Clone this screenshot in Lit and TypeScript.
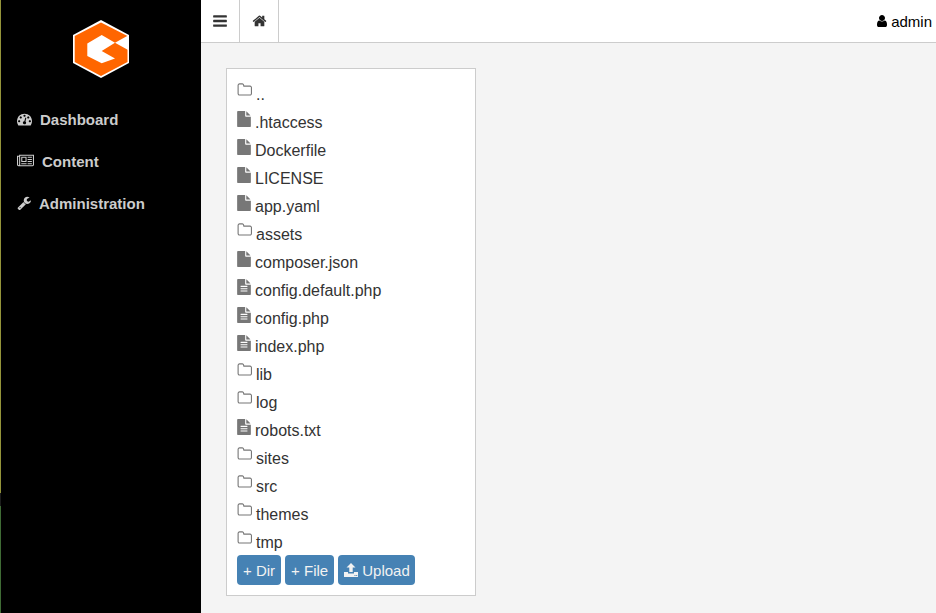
import { LitElement, html, css, svg } from "lit";
import { customElement } from "lit/decorators.js";

const P = {
  bars: "M1664 1344v128q0 26-19 45t-45 19h-1408q-26 0-45-19t-19-45v-128q0-26 19-45t45-19h1408q26 0 45 19t19 45zm0-512v128q0 26-19 45t-45 19h-1408q-26 0-45-19t-19-45v-128q0-26 19-45t45-19h1408q26 0 45 19t19 45zm0-512v128q0 26-19 45t-45 19h-1408q-26 0-45-19t-19-45v-128q0-26 19-45t45-19h1408q26 0 45 19t19 45z",
  home: "M1472 992v480q0 26-19 45t-45 19h-384v-384h-256v384h-384q-26 0-45-19t-19-45v-480q0-1 .5-3t.5-3l575-474 575 474q1 2 1 6zm223-69l-62 74q-8 9-21 11h-3q-13 0-21-7l-692-577-692 577q-12 8-24 7-13-2-21-11l-62-74q-8-10-7-23.500t11-21.500l719-599q32-26 76-26t76 26l244 204v-195q0-14 9-23t23-9h192q14 0 23 9t9 23v408l219 182q10 8 11 21.500t-7 23.500z",
  user: "M1536 1399q0 109-62.500 187t-150.500 78h-854q-88 0-150.500-78t-62.500-187q0-85 8.500-160.500t31.500-152 58.500-131 94-89 134.500-34.500q131 128 313 128t313-128q76 0 134.500 34.500t94 89 58.500 131 31.500 152 8.500 160.500zm-256-887q0 159-112.500 271.500t-271.500 112.500-271.500-112.500-112.500-271.500 112.500-271.500 271.500-112.500 271.500 112.500 112.500 271.500z",
  folder: "M1600 1312v-704q0-40-28-68t-68-28h-704q-40 0-68-28t-28-68v-64q0-40-28-68t-68-28h-320q-40 0-68 28t-28 68v960q0 40 28 68t68 28h1216q40 0 68-28t28-68zm128-704v704q0 92-66 158t-158 66h-1216q-92 0-158-66t-66-158v-960q0-92 66-158t158-66h320q92 0 158 66t66 158v32h672q92 0 158 66t66 158z",
  file: "M1024 512v-472q22 14 36 28l408 408q14 14 28 36h-472zm-128 32q0 40 28 68t68 28h544v1056q0 40-28 68t-68 28h-1344q-40 0-68-28t-28-68v-1600q0-40 28-68t68-28h800v544z",
  text: "M1596 476q14 14 28 36h-472v-472q22 14 36 28zm-476 164h544v1056q0 40-28 68t-68 28h-1344q-40 0-68-28t-28-68v-1600q0-40 28-68t68-28h800v544q0 40 28 68t68 28zm160 736v-64q0-14-9-23t-23-9h-704q-14 0-23 9t-9 23v64q0 14 9 23t23 9h704q14 0 23-9t9-23zm0-256v-64q0-14-9-23t-23-9h-704q-14 0-23 9t-9 23v64q0 14 9 23t23 9h704q14 0 23-9t9-23zm0-256v-64q0-14-9-23t-23-9h-704q-14 0-23 9t-9 23v64q0 14 9 23t23 9h704q14 0 23-9t9-23z",
  dash: "M384 1152q0-53-37.500-90.500t-90.500-37.500-90.500 37.500-37.500 90.500 37.500 90.500 90.500 37.500 90.500-37.500 37.500-90.500zm192-448q0-53-37.500-90.500t-90.500-37.500-90.500 37.500-37.500 90.500 37.500 90.500 90.500 37.500 90.500-37.500 37.500-90.500zm428 481l101-382q6-26-7.500-48.500t-38.500-29.500-48 7-30 39l-101 382q-60 5-107 43.500t-63 98.500q-20 77 20 146t117 89 146-20 89-117q16-60-6-117t-72-91zm660-33q0-53-37.500-90.500t-90.500-37.500-90.500 37.500-37.500 90.500 37.500 90.500 90.500 37.500 90.500-37.500 37.500-90.500zm-640-640q0-53-37.500-90.500t-90.500-37.500-90.500 37.500-37.500 90.500 37.500 90.500 90.500 37.500 90.500-37.500 37.500-90.500zm448 192q0-53-37.500-90.500t-90.500-37.500-90.500 37.500-37.500 90.500 37.500 90.500 90.500 37.500 90.500-37.500 37.500-90.500zm320 448q0 261-141 483-19 29-54 29h-1402q-35 0-54-29-141-221-141-483 0-182 71-348t191-286 286-191 348-71 348 71 286 191 191 286 71 348z",
  news: "M1024 512h-384v384h384v-384zm128 640v128h-640v-128h640zm0-768v640h-640v-640h640zm640 768v128h-512v-128h512zm0-256v128h-512v-128h512zm0-256v128h-512v-128h512zm0-256v128h-512v-128h512zm-1536 960v-960h-128v960q0 26 19 45t45 19 45-19 19-45zm1664 0v-1088h-1536v1088q0 33-11 64h1483q26 0 45-19t19-45zm128-1216v1216q0 80-56 136t-136 56h-1664q-80 0-136-56t-56-136v-1088h256v-128h1792z",
  wrench: "M448 1472q0-26-19-45t-45-19-45 19-19 45 19 45 45 19 45-19 19-45zm644-420l-682 682q-37 37-90 37-52 0-91-37l-106-108q-38-36-38-90 0-53 38-91l681-681q39 98 114.500 173.500t173.500 114.500zm634-435q0 39-23 106-47 134-164.500 217.500t-258.500 83.500q-185 0-316.500-131.500t-131.500-316.500 131.500-316.500 316.500-131.500q58 0 121.500 16.500t107.500 46.500q16 11 16 28t-16 28l-293 169v224l193 107q5-3 79-48.500t135.500-81 70.500-35.500q15 0 23.500 10t8.500 25z",
};

const icon = (d: string, vb: string, cls: string) =>
  html`<svg class=${cls} viewBox=${vb} fill="currentColor" aria-hidden="true">${svg`<path d=${d}></path>`}</svg>`;

type Kind = "folder" | "file" | "text";
const ENTRIES: [string, Kind][] = [
  ["..", "folder"],
  [".htaccess", "file"],
  ["Dockerfile", "file"],
  ["LICENSE", "file"],
  ["app.yaml", "file"],
  ["assets", "folder"],
  ["composer.json", "file"],
  ["config.default.php", "text"],
  ["config.php", "text"],
  ["index.php", "text"],
  ["lib", "folder"],
  ["log", "folder"],
  ["robots.txt", "text"],
  ["sites", "folder"],
  ["src", "folder"],
  ["themes", "folder"],
  ["tmp", "folder"],
];

@customElement("app-root")
export class AppRoot extends LitElement {
  static styles = css`
    :host {
      display: flex;
      height: 100vh;
      min-height: 613px;
      background: #f4f4f4;
      font-family: "Liberation Sans", Arial, sans-serif;
      color: #333;
      overflow: hidden;
    }
    .side {
      width: 201px;
      flex: none;
      box-sizing: border-box;
      padding-top: 20px;
      background:
        linear-gradient(to bottom, #94943a 0 493px, #1c1c1c 493px 506px, #3f6b35 506px) left top / 1px 100% no-repeat,
        #000;
    }
    .logo {
      display: block;
      width: 58px;
      height: 60px;
      margin: 0 0 18px 72px;
    }
    .nav {
      display: flex;
      align-items: center;
      gap: 8px;
      height: 42px;
      padding-left: 17px;
      color: #ccc;
      font-size: 15px;
      font-weight: 700;
    }
    .nav svg { flex: none; height: 16px; }
    .i-dash { width: 15px; }
    .i-news { width: 17px; }
    .i-wrench { width: 14px; }
    .main { flex: 1; min-width: 0; display: flex; flex-direction: column; }
    .top {
      height: 42px;
      flex: none;
      display: flex;
      align-items: stretch;
      background: #fff;
      border-bottom: 1px solid #ccc;
    }
    .tool {
      display: flex;
      align-items: center;
      justify-content: center;
      width: 38px;
      border-right: 1px solid #ccc;
      color: #333;
    }
    .tool svg { width: 14px; height: 16px; }
    .tool .i-home { width: 15px; }
    .user {
      margin-left: auto;
      padding-right: 4px;
      display: flex;
      align-items: center;
      gap: 4px;
      color: #000;
      font-size: 15px;
    }
    .i-user { width: 11px; height: 16px; }
    .content { padding: 25px; }
    .panel {
      box-sizing: border-box;
      width: 250px;
      height: 528px;
      padding: 14px 10px 10px;
      background: #fff;
      border: 1px solid #ccc;
      display: flex;
      flex-direction: column;
    }
    .list { display: flex; flex-direction: column; gap: 4px; }
    .row {
      display: flex;
      align-items: flex-start;
      gap: 4px;
      height: 24px;
      line-height: 24px;
      font-size: 16px;
      color: #333;
    }
    .row svg { flex: none; color: #777; }
    .i-folder { width: 15px; height: 16px; margin-top: -1px; }
    .i-file { width: 14px; height: 16px; }
    .btns { display: flex; gap: 4px; }
    .btn {
      display: flex;
      align-items: center;
      gap: 4px;
      height: 30px;
      padding: 0 6px;
      border-radius: 4px;
      background: #4682b4;
      color: #f2f2f2;
      font-size: 15px;
    }
    .btn svg { width: 14px; height: 14px; margin-top: -1px; }
    .btn.up { padding-right: 5px; }
  `;

  private fileIcon(k: Kind) {
    if (k === "folder") return icon(P.folder, "0 0 1728 1792", "i-folder");
    if (k === "file") return icon(P.file, "0 0 1536 1792", "i-file");
    return icon(P.text, "128 0 1536 1792", "i-file");
  }

  render() {
    return html`
      <aside class="side">
        <svg class="logo" viewBox="72 20 58 60" aria-hidden="true">
          <polygon fill="#fff" points="101,20 129,35 129,63 101,78 73,63 73,35"></polygon>
          <polygon fill="#f60" points="101,22.500 127.500,36 127.500,62 101,76 74.700,62 74.700,36"></polygon>
          <polygon fill="#fff" points="87.300,43.500 101.700,35 115,42.700 101.700,51 115,58.500 101.700,63.300 87.300,56"></polygon>
          <polygon fill="#fff" points="129,35 115,42.700 129,50.500"></polygon>
        </svg>
        <div class="nav">${icon(P.dash, "0 0 1792 1792", "i-dash")}<span>Dashboard</span></div>
        <div class="nav">${icon(P.news, "0 0 2048 1792", "i-news")}<span>Content</span></div>
        <div class="nav">${icon(P.wrench, "0 0 1728 1792", "i-wrench")}<span>Administration</span></div>
      </aside>
      <div class="main">
        <header class="top">
          <div class="tool">${icon(P.bars, "128 0 1536 1792", "i-bars")}</div>
          <div class="tool">${icon(P.home, "0 0 1792 1792", "i-home")}</div>
          <div class="user">${icon(P.user, "128 0 1408 1792", "i-user")}<span>admin</span></div>
        </header>
        <div class="content">
          <section class="panel">
            <div class="list">
              ${ENTRIES.map(([n, k]) => html`<div class="row">${this.fileIcon(k)}<span>${n}</span></div>`)}
            </div>
            <div class="btns">
              <div class="btn">+ Dir</div>
              <div class="btn">+ File</div>
              <div class="btn up">
                <svg viewBox="0 0 14 14" fill="currentColor" aria-hidden="true">
                  <path fill-rule="evenodd" d="M7 0 L11.500 4.500 H8.700 V9 H5.300 V4.500 H2.500 Z M0 9 H4 V10.500 H10 V9 H14 V14 H0 Z M10.500 12 H11.500 V13 H10.500 Z M12.200 12 H13.200 V13 H12.200 Z"></path>
                </svg>
                <span>Upload</span>
              </div>
            </div>
          </section>
        </div>
      </div>
    `;
  }
}
